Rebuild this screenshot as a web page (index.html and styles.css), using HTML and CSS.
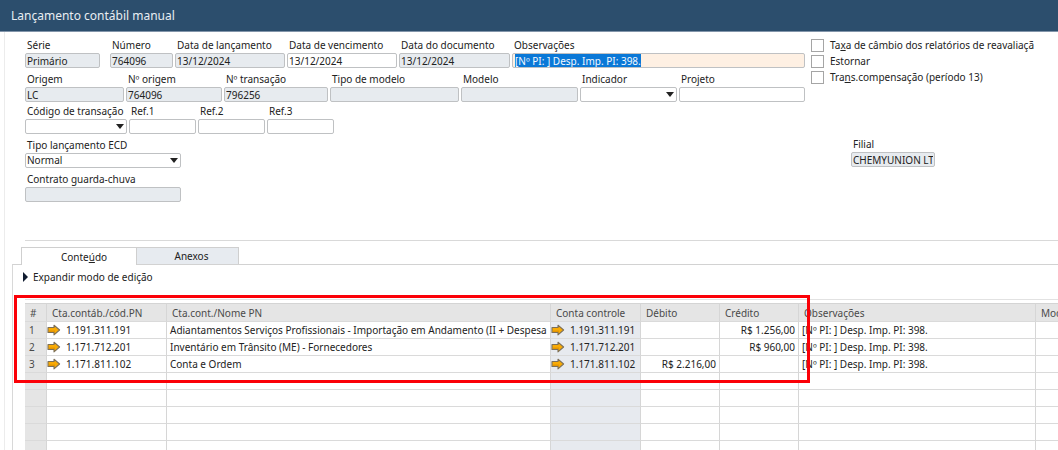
FILE: index.html
```html
<!DOCTYPE html>
<html lang="pt-BR">
<head>
<meta charset="utf-8">
<title>Lançamento contábil manual</title>
<link rel="stylesheet" href="styles.css">
</head>
<body>
<svg class="defs" aria-hidden="true">
  <symbol id="arrow" viewBox="0 0 14 12"><path d="M1 3.5h6V1.2L12.6 6 7 10.8V8.5H1z" fill="#f9ab05" stroke="#7c6f58" stroke-width="1.1" stroke-linejoin="round"/><path d="M2 7.2h6" stroke="#d98c00" stroke-width="1"/></symbol>
</svg>
<header class="titlebar"><h1>Lançamento contábil manual</h1></header>
<main class="window">
  <form class="form">
    <div class="fields">
      <div class="row row-main">
        <div class="field"><label for="serie">Série</label><input id="serie" class="off" value="Primário" readonly></div>
        <div class="field"><label for="numero">Número</label><input id="numero" class="off" value="764096" readonly></div>
        <div class="field"><label for="dlanc">Data de lançamento</label><input id="dlanc" class="off" value="13/12/2024" readonly></div>
        <div class="field"><label for="dvenc">Data de vencimento</label><input id="dvenc" value="13/12/2024"></div>
        <div class="field"><label for="ddoc">Data do documento</label><input id="ddoc" class="off" value="13/12/2024" readonly></div>
        <div class="field"><label for="obs">Observações</label><input id="obs" class="active" value="[Nº PI: ] Desp. Imp. PI: 398."></div>
      </div>
      <div class="row row-origin">
        <div class="field"><label for="origem">Origem</label><input id="origem" class="off" value="LC" readonly></div>
        <div class="field"><label for="norig">Nº origem</label><input id="norig" class="off" value="764096" readonly></div>
        <div class="field"><label for="ntrans">Nº transação</label><input id="ntrans" class="off" value="796256" readonly></div>
        <div class="field"><label for="tmodelo">Tipo de modelo</label><input id="tmodelo" class="off" readonly></div>
        <div class="field"><label for="modelo">Modelo</label><input id="modelo" class="off" readonly></div>
        <div class="field"><label for="indic">Indicador</label><select id="indic"><option></option></select></div>
        <div class="field"><label for="projeto">Projeto</label><input id="projeto"></div>
      </div>
      <div class="row row-refs">
        <div class="field"><label for="codigo">Código de transação</label><select id="codigo"><option></option></select></div>
        <div class="field"><label for="ref1">Ref.1</label><input id="ref1"></div>
        <div class="field"><label for="ref2">Ref.2</label><input id="ref2"></div>
        <div class="field"><label for="ref3">Ref.3</label><input id="ref3"></div>
      </div>
      <div class="row row-single">
        <div class="field"><label for="ecd">Tipo lançamento ECD</label><select id="ecd"><option>Normal</option></select></div>
      </div>
      <div class="row row-single">
        <div class="field"><label for="contrato">Contrato guarda-chuva</label><input id="contrato" class="off" readonly></div>
      </div>
    </div>
    <div class="side">
      <label class="check"><input type="checkbox"><span>Ta<u>x</u>a de câmbio dos relatórios de reavaliaçã</span></label>
      <label class="check"><input type="checkbox"><span>Estornar</span></label>
      <label class="check"><input type="checkbox"><span>Tra<u>n</u>s.compensação (período 13)</span></label>
      <div class="field branch"><label for="filial">Filial</label><input id="filial" class="off" value="CHEMYUNION LTDA" readonly></div>
    </div>
  </form>

  <div class="tabs" role="tablist">
    <button class="tab tab-on" role="tab" aria-selected="true">Conte<u>ú</u>do</button>
    <button class="tab tab-off" role="tab" aria-selected="false">Anexos</button>
  </div>

  <section class="panel">
    <button class="expand"><svg viewBox="0 0 5 10"><path d="M0 0 5 5 0 10z" fill="#111c30"/></svg>Expandir modo de edição</button>
    <div class="grid">
      <table class="entries">
        <colgroup><col class="c-num"><col class="c-code"><col class="c-name"><col class="c-control"><col class="c-money"><col class="c-money"><col class="c-note"><col></colgroup>
        <thead>
          <tr><th>#</th><th>Cta.contáb./cód.PN</th><th>Cta.cont./Nome PN</th><th>Conta controle</th><th>Débito</th><th>Crédito</th><th>Observações</th><th>Modelo</th></tr>
        </thead>
        <tbody>
          <tr><td>1</td><td><span class="account"><svg><use href="#arrow"/></svg>1.191.311.191</span></td><td>Adiantamentos Serviços Profissionais - Importação em Andamento (II + Despesa</td><td><span class="account"><svg><use href="#arrow"/></svg>1.191.311.191</span></td><td class="money"></td><td class="money">R$ 1.256,00</td><td>[Nº PI: ] Desp. Imp. PI: 398.</td><td></td></tr>
          <tr><td>2</td><td><span class="account"><svg><use href="#arrow"/></svg>1.171.712.201</span></td><td>Inventário em Trânsito (ME) - Fornecedores</td><td><span class="account"><svg><use href="#arrow"/></svg>1.171.712.201</span></td><td class="money"></td><td class="money">R$ 960,00</td><td>[Nº PI: ] Desp. Imp. PI: 398.</td><td></td></tr>
          <tr><td>3</td><td><span class="account"><svg><use href="#arrow"/></svg>1.171.811.102</span></td><td>Conta e Ordem</td><td><span class="account"><svg><use href="#arrow"/></svg>1.171.811.102</span></td><td class="money">R$ 2.216,00</td><td class="money"></td><td>[Nº PI: ] Desp. Imp. PI: 398.</td><td></td></tr>
          <tr><td></td><td></td><td></td><td></td><td></td><td></td><td></td><td></td></tr>
          <tr><td></td><td></td><td></td><td></td><td></td><td></td><td></td><td></td></tr>
          <tr><td></td><td></td><td></td><td></td><td></td><td></td><td></td><td></td></tr>
          <tr><td></td><td></td><td></td><td></td><td></td><td></td><td></td><td></td></tr>
          <tr><td></td><td></td><td></td><td></td><td></td><td></td><td></td><td></td></tr>
        </tbody>
      </table>
      <div class="highlight"></div>
    </div>
  </section>
</main>
<script src="app.js"></script>
</body>
</html>
```
FILE: styles.css
```css
* { box-sizing: border-box; }

body {
  margin: 0;
  height: 100vh;
  display: flex;
  flex-direction: column;
  overflow: hidden;
  background: #fff;
  color: #222;
  font: 10px/14px "Noto Sans", "DejaVu Sans", sans-serif;
}

input, select, button { font: inherit; color: inherit; }

.defs { position: absolute; width: 0; height: 0; }

.titlebar {
  flex: none;
  height: 32px;
  padding: 0 11px;
  display: flex;
  align-items: center;
  background: #2c4e6d;
  border-bottom: 1px solid #8295aa;
}

.titlebar h1 {
  margin: 0;
  color: #e8edf2;
  font: 12px/16px "Noto Sans", sans-serif;
}

.window {
  flex: 1;
  min-height: 0;
  margin-left: 4px;
  border-left: 1px solid #ececec;
  display: flex;
  flex-direction: column;
}

.form {
  display: flex;
  gap: 6px;
  margin-left: 20px;
  padding: 6px 0 34px;
  border-bottom: 1px solid #d9d9d9;
}

.fields { flex: 780; min-width: 0; }
.side { flex: 247; min-width: 0; }

.row { display: grid; column-gap: 2px; margin-bottom: 4px; }
.row-main { grid-template-columns: 75fr 71fr 110fr 110fr 111fr 293fr; }
.row-main .field:nth-child(2) { padding-left: 8px; }
.row-origin { grid-template-columns: 99fr 96fr 104fr 129fr 117fr 97fr 126fr; margin-bottom: 2px; }
.row-refs { grid-template-columns: 102px 67px 67px 67px; }
.row-single { grid-template-columns: 156px; }

.field { display: flex; flex-direction: column; min-width: 0; }
.field label { height: 15px; line-height: 14px; padding-left: 2px; white-space: nowrap; }

.field input,
.field select {
  width: 100%;
  height: 15px;
  margin: 0;
  padding: 0 1px;
  border: 1px solid #bfc1c3;
  border-radius: 2px;
  background: #fff;
  line-height: 13px;
  outline: none;
}

.field input.off { background: #e7ebef; }
.field input.active { background: #fef0e3; padding-left: 2px; }
.field input.active::selection { background: #0a78d7; color: #f4f9ff; }

.field select {
  appearance: none;
  background: #fff url("data:image/svg+xml,%3Csvg xmlns='http://www.w3.org/2000/svg' viewBox='0 0 8 5'%3E%3Cpath d='M0 0h8L4 5z' fill='%23222'/%3E%3C/svg%3E") no-repeat right 2px center / 8px 5px;
}

.check { display: flex; align-items: center; gap: 6px; height: 16px; white-space: nowrap; }
.check input {
  appearance: none;
  flex: none;
  width: 13px;
  height: 13px;
  margin: 0;
  border: 1px solid #a5a5a5;
  background: #fff;
}

.side { margin-top: -1px; }
.branch { width: 84px; margin: 52px 0 0 40px; }

.tabs { display: flex; flex: none; margin: 6px 0 0 16px; height: 17px; }
.tab {
  padding: 0;
  border: 1px solid #cfcfcf;
  border-bottom: 0;
  line-height: 14px;
}
.tab-on { width: 116px; padding-left: 10px; background: #fff; margin-bottom: -1px; z-index: 1; }
.tab-off { width: 102px; padding-left: 8px; border-left: 0; background: #e7ebf0; }

.panel {
  flex: 1;
  min-height: 0;
  margin-left: 7px;
  border-top: 1px solid #d2d2d2;
  border-left: 1px solid #d8d8d8;
}

.expand {
  display: flex;
  align-items: center;
  gap: 5px;
  margin: 5px 0 0 10px;
  padding: 0;
  border: 0;
  background: none;
}
.expand svg { width: 5px; height: 10px; }

.grid {
  position: relative;
  margin: 15px 0 0 12px;
  padding-top: 3px;
  border-top: 1px solid #e2e2e2;
}

.entries { width: 100%; table-layout: fixed; border-collapse: separate; border-spacing: 0; }
.c-num { width: 22px; }
.c-code { width: 120px; }
.c-name { width: 384px; }
.c-control { width: 90px; }
.c-money { width: 79px; }
.c-note { width: 237px; }

.entries th,
.entries td {
  height: 17px;
  padding: 0 3px;
  border-right: 1px solid #d6d6d6;
  border-bottom: 1px solid #dadada;
  text-align: left;
  font-weight: normal;
  line-height: 16px;
  white-space: nowrap;
  overflow: hidden;
}
.entries th {
  height: 19px;
  padding: 0 5px;
  border-top: 1px solid #d4d4d4;
  background: #e5e5e5;
  color: #4a4a4a;
}
.entries td:first-child { padding-left: 4px; background: #e5e5e5; color: #4a4a4a; }
.entries td:nth-child(4) { background: #e7eaef; }
.entries td:nth-child(2), .entries td:nth-child(4) { padding-left: 0; }
.entries .money { text-align: right; padding-right: 3px; }
.entries th:last-child, .entries td:last-child { border-right: 0; }

.account { display: flex; align-items: center; gap: 5px; }
.account svg { width: 14px; height: 12px; }

.highlight {
  position: absolute;
  top: -5px;
  left: -11px;
  width: 796px;
  height: 88px;
  border: 3px solid #fb0007;
}
```
FILE: app.js
```js
const notes = document.getElementById("obs");
notes.focus();
notes.select();
```
